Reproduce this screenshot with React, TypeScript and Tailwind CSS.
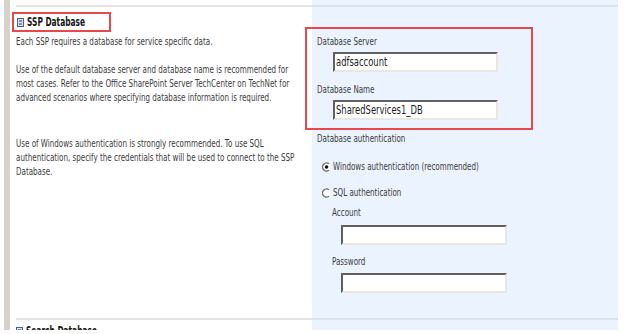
import React from "react";

const FONT = { fontFamily: '"DejaVu Sans", "Liberation Sans", sans-serif' };

// the source shot is squeezed horizontally, so every text line is scaled on x
function Line({ children, className = "" }: { children: React.ReactNode; className?: string }) {
  return (
    <div className={`origin-left scale-x-[0.65] whitespace-nowrap text-[11px] leading-[14px] text-[#3c3c3c] ${className}`}>
      {children}
    </div>
  );
}

function SectionIcon() {
  return (
    <svg width="7" height="9" viewBox="0 0 7 9" className="shrink-0">
      <rect x="0.5" y="0.5" width="6" height="8" fill="#d9e3f3" stroke="#4b5f86" />
      <line x1="2" y1="3" x2="5" y2="3" stroke="#24386a" />
      <line x1="2" y1="6" x2="5" y2="6" stroke="#24386a" />
    </svg>
  );
}

function Radio({ checked }: { checked?: boolean }) {
  return (
    <svg width="9" height="10" viewBox="0 0 9 10" className="shrink-0">
      <circle cx="4.5" cy="5" r="4" fill="#ffffff" />
      <path d="M7 1.8 A4 4 0 1 0 7 8.2" fill="none" stroke="#6d6d6d" strokeWidth="1.3" />
      {checked && <circle cx="4.6" cy="5" r="1.8" fill="#111111" />}
    </svg>
  );
}

function TextBox({ value, className = "" }: { value?: string; className?: string }) {
  return (
    <div
      className={`flex h-[20px] items-center border-2 border-t-[#5f5f5f] border-l-[#5f5f5f] border-r-[#e9e7df] border-b-[#e9e7df] bg-white pl-[1px] ${className}`}
    >
      {value && (
        <span className="block origin-left scale-x-[0.7] whitespace-nowrap text-[12px] leading-[14px] text-[#1e1e1e]">
          {value}
        </span>
      )}
    </div>
  );
}

export default function App() {
  return (
    <div className="h-[334px] w-[628px] bg-white" style={FONT}>
      <div className="flex h-[330px] overflow-hidden">
        <div className="w-[4px]" />
        <div className="w-[6px] bg-[#d6d2ca]" />
        <div className="w-[6px]" />

        {/* Left column: description */}
        <div className="flex w-[296px] flex-col">
          <div className="h-[5px] shrink-0" />
          <div className="h-[2px] shrink-0 bg-[#e4e4e4]" />
          <div className="h-[311px] shrink-0">
            <div className="-ml-[4px] mt-[5px] flex h-[20px] w-[99px] items-center gap-[3px] border-2 border-[#e8474c] pl-[3px]">
              <SectionIcon />
              <span className="block origin-left scale-x-[0.62] whitespace-nowrap text-[12px] font-bold leading-[14px] text-[#151515]">
                SSP Database
              </span>
            </div>

            <Line className="mt-[3px]">Each SSP requires a database for service specific data.</Line>

            <div className="mt-[14px]">
              <Line>Use of the default database server and database name is recommended for</Line>
              <Line>most cases. Refer to the Office SharePoint Server TechCenter on TechNet for</Line>
              <Line>advanced scenarios where specifying database information is required.</Line>
            </div>

            <div className="mt-[32px]">
              <Line>Use of Windows authentication is strongly recommended. To use SQL</Line>
              <Line>authentication, specify the credentials that will be used to connect to the SSP</Line>
              <Line>Database.</Line>
            </div>
          </div>
          <div className="h-[2px] shrink-0 bg-[#e4e4e4]" />
          <div className="mt-[4px] flex shrink-0 items-center gap-[3px]">
            <SectionIcon />
            <span className="block origin-left scale-x-[0.62] whitespace-nowrap text-[12px] font-bold leading-[14px] text-[#151515]">
              Search Database
            </span>
          </div>
        </div>

        {/* Right column: inputs */}
        <div className="flex w-[306px] flex-col bg-[#ebf3fe]">
          <div className="h-[5px] shrink-0" />
          <div className="h-[2px] shrink-0 bg-[#dde2e9]" />
          <div className="h-[311px] shrink-0">
            <div className="-ml-[7px] mt-[20px] h-[103px] w-[228px] border-2 border-[#e8474c] pl-[10px] pt-[6px]">
              <Line>Database Server</Line>
              <TextBox value="adfsaccount" className="ml-[16px] mt-[3px] w-[165px]" />
              <Line className="mt-[11px]">Database Name</Line>
              <TextBox value="SharedServices1_DB" className="ml-[16px] mt-[3px] w-[165px]" />
            </div>

            <div className="pl-[5px]">
              <Line className="mt-[2px]">Database authentication</Line>

              <div className="mt-[14px] flex items-center gap-[2px] pl-[5px]">
                <Radio checked />
                <Line>Windows authentication (recommended)</Line>
              </div>
              <div className="mt-[12px] flex items-center gap-[2px] pl-[5px]">
                <Radio />
                <Line>SQL authentication</Line>
              </div>

              <div className="pl-[15px]">
                <Line className="mt-[6px]">Account</Line>
                <TextBox className="ml-[9px] mt-[5px] w-[166px]" />
                <Line className="mt-[10px]">Password</Line>
                <TextBox className="ml-[9px] mt-[4px] w-[166px]" />
              </div>
            </div>
          </div>
          <div className="h-[2px] shrink-0 bg-[#dde2e9]" />
        </div>
      </div>
    </div>
  );
}
